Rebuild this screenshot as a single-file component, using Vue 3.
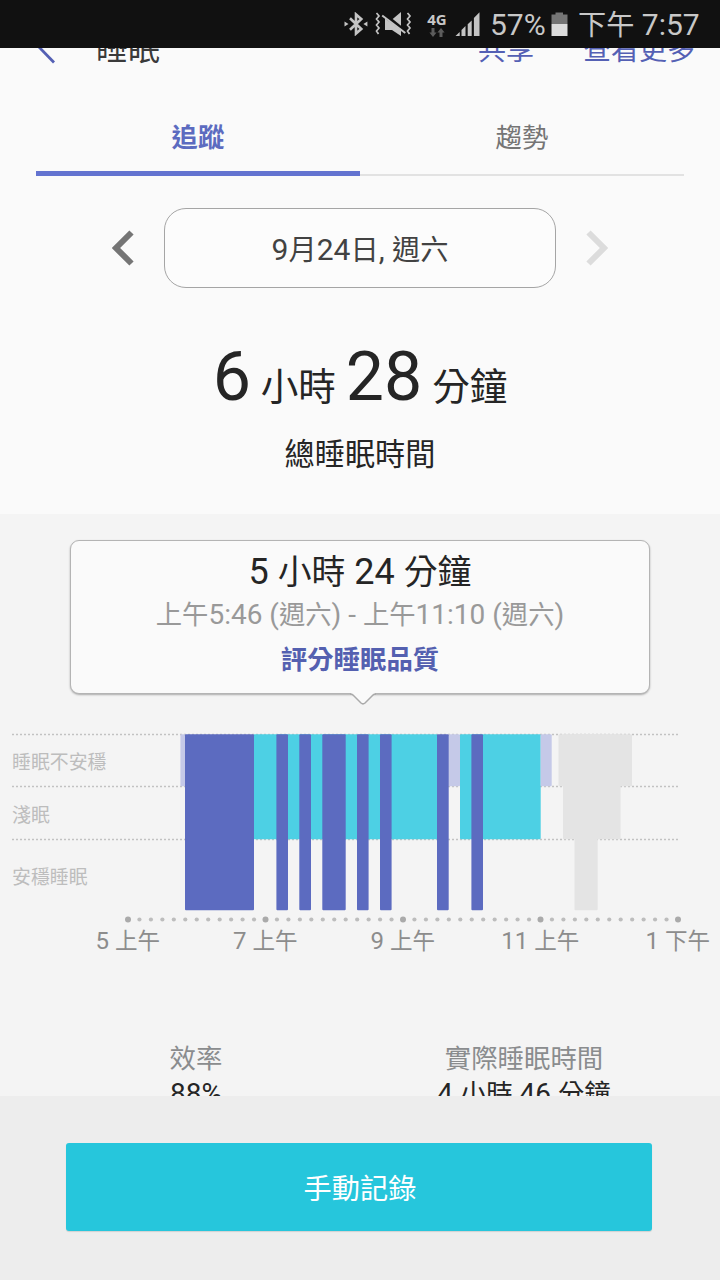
<script setup>
import { h } from 'vue'

// Renders text with Chinese runs slightly smaller than the Latin digits.
const Mixed = (props) =>
  h(
    'span',
    { class: 'mixed' },
    props.text
      .split(/([\u4e00-\u9fff]+)/)
      .filter(Boolean)
      .map((run) => (/[\u4e00-\u9fff]/.test(run) ? h('span', { class: 'han' }, run) : run))
  )
Mixed.props = ['text']

const lines = [9.5, 61.5, 114.5]

const LIGHT = 52
const MID = 105
const DEEP = 176
const bars = [
  { x: 180.4, w: 5, d: LIGHT, c: '#c5c9e8' },
  { x: 253.5, w: 184, d: MID, c: '#4dd0e4' },
  { x: 448.2, w: 11.8, d: LIGHT, c: '#c5c9e8' },
  { x: 460, w: 80.7, d: MID, c: '#4dd0e4' },
  { x: 540.7, w: 11, d: LIGHT, c: '#c5c9e8' },
  { x: 185, w: 69, d: DEEP, c: '#5c6bc0' },
  { x: 276.4, w: 11.6, d: DEEP, c: '#5c6bc0' },
  { x: 299.3, w: 11.7, d: DEEP, c: '#5c6bc0' },
  { x: 322.3, w: 23.4, d: DEEP, c: '#5c6bc0' },
  { x: 357, w: 11.6, d: DEEP, c: '#5c6bc0' },
  { x: 380, w: 11.6, d: DEEP, c: '#5c6bc0' },
  { x: 437, w: 11.7, d: DEEP, c: '#5c6bc0' },
  { x: 471.4, w: 11.6, d: DEEP, c: '#5c6bc0' },
  { x: 558.5, w: 73.5, d: LIGHT, c: '#e4e4e4' },
  { x: 563, w: 57.6, d: MID, c: '#e4e4e4' },
  { x: 574.5, w: 23.2, d: DEEP, c: '#e4e4e4' }
]

const dots = Array.from({ length: 49 }, (_, i) => ({
  x: 128 + (i * 550) / 48,
  major: i % 12 === 0
}))

const hours = ['5 上午', '7 上午', '9 上午', '11 上午', '1 下午']
</script>

<template>
  <div class="screen">
    <div class="status">
      <svg class="bt" width="24" height="24" viewBox="0 0 24 24">
        <path d="M6 6.3 L17.3 17 L12 21.6 V2.4 L17.3 7 L6 17.7" fill="none" stroke="#c4c4c4" stroke-width="2.6" />
        <path d="M0.5 9.5 L4.5 12 L0.5 14.5Z M23.4 9.5 L19.4 12 L23.4 14.5Z" fill="#c4c4c4" />
      </svg>
      <svg class="mute" width="38" height="26" viewBox="0 0 38 26">
        <path d="M27 1 V14.8 L18.7 8Z" fill="#c4c4c4" />
        <path d="M8.2 4.5 L31.3 22" stroke="#c4c4c4" stroke-width="2" />
        <path d="M11 7.5 L27 19 V25 L18 19 H11Z" fill="#c4c4c4" />
        <path d="M2.5 2 L5 5 L2.5 8 L5 11 L2.5 14 L5 17 L2.5 20 L4.5 23 M33.5 2 L36 5 L33.5 8 L36 11 L33.5 14 L36 17 L33.5 20 L35.5 23" fill="none" stroke="#c4c4c4" stroke-width="1.7" />
      </svg>
      <div class="net">
        <span>4G</span>
        <svg width="16" height="9" viewBox="0 0 16 9">
          <path d="M2.5 0 H5.5 V4.5 H7.6 L4 9 L0.4 4.5 H2.5Z M10.5 9 H13.5 V4.5 H15.6 L12 0 L8.4 4.5 H10.5Z" fill="#5c5c5c" />
        </svg>
      </div>
      <svg class="signal" width="26" height="25" viewBox="0 0 26 25">
        <path d="M0.5 24 L4.7 20 V24Z M6.5 24 V18 L10.5 14 V24Z M12.7 24 V12.3 L16.7 8.4 V24Z M18.9 24 V6 L24.5 0.3 V24Z" fill="#c4c4c4" />
      </svg>
      <span class="pct">57%</span>
      <svg class="battery" width="17" height="24" viewBox="0 0 17 24">
        <path d="M4.5 0.5 H12 V2.5 H16.5 V12 H0.5 V2.5 H4.5Z" fill="#757575" />
        <rect x="0.5" y="12" width="16" height="12" fill="#dcdcdc" />
      </svg>
      <Mixed class="clock" text="下午 7:57" />
    </div>

    <div class="overview">
      <header class="bar">
        <svg class="back" width="22" height="18" viewBox="0 0 22 18">
          <path d="M2 -2 L18 14.5" stroke="#5460b4" stroke-width="2.8" />
        </svg>
        <span class="title">睡眠</span>
        <span class="act">共享</span>
        <span class="act">查看更多</span>
      </header>
      <nav class="tabs">
        <div class="tab on">追蹤</div>
        <div class="tab">趨勢</div>
      </nav>
      <div class="picker">
        <svg width="22" height="36" viewBox="0 0 22 36">
          <path d="M19.5 2.5 L4 18 L19.5 33.5" fill="none" stroke="#757575" stroke-width="6" />
        </svg>
        <div class="date"><Mixed text="9月24日, 週六" /></div>
        <svg width="22" height="36" viewBox="0 0 22 36">
          <path d="M2.5 2.5 L18 18 L2.5 33.5" fill="none" stroke="#dcdcdc" stroke-width="6" />
        </svg>
      </div>
      <div class="total"><b>6</b> <Mixed text="小時" /> <b>28</b> <Mixed text="分鐘" /></div>
      <div class="caption">總睡眠時間</div>
    </div>

    <div class="detail">
      <div class="card">
        <div class="dur"><Mixed text="5 小時 24 分鐘" /></div>
        <div class="range"><Mixed text="上午5:46 (週六) - 上午11:10 (週六)" /></div>
        <div class="rate">評分睡眠品質</div>
        <svg class="tip" width="30" height="14" viewBox="0 0 30 14">
          <path d="M3 0 V2 L4 2 L13 11 Q15 13 17 11 L26 2 L27 2 V0Z" fill="#fafafa" />
          <path d="M2 2 Q4 2 5 3 L13 11 Q15 12.8 17 11 L25 3 Q26 2 28 2" fill="none" stroke="#aaa" stroke-width="1.5" />
        </svg>
      </div>

      <div class="chart">
        <div class="levels">
          <span>睡眠不安穩</span>
          <span>淺眠</span>
          <span>安穩睡眠</span>
        </div>
        <svg class="plot" width="720" height="200" viewBox="0 0 720 200">
          <line v-for="y in lines" :key="y" x1="12" x2="678" :y1="y" :y2="y" stroke="#c2c2c2" stroke-width="1.7" stroke-dasharray="2 2" />
          <rect v-for="(b, i) in bars" :key="i" :x="b.x" y="9.3" :width="b.w" :height="b.d" :fill="b.c" rx="1" />
          <circle v-for="d in dots" :key="d.x" :cx="d.x" cy="194.5" :r="d.major ? 3 : 2.1" :fill="d.major ? '#aaa' : '#bdbdbd'" />
        </svg>
      </div>
      <div class="hours">
        <div v-for="t in hours" :key="t"><Mixed :text="t" /></div>
      </div>

      <div class="stats">
        <div>
          <div class="name">效率</div>
          <div class="val">88%</div>
        </div>
        <div>
          <div class="name">實際睡眠時間</div>
          <div class="val"><Mixed text="4 小時 46 分鐘" /></div>
        </div>
      </div>
    </div>

    <footer class="foot">
      <button class="record">手動記錄</button>
    </footer>
  </div>
</template>

<style>
body { margin: 0; overflow: hidden; }
.mixed { white-space: pre; }
.han { font-size: 0.94em; }
</style>

<style scoped>
.screen {
  width: 720px;
  height: 1280px;
  display: flex;
  flex-direction: column;
  overflow: hidden;
  font-family: Roboto, "Noto Sans CJK TC", sans-serif;
  color: #252525;
  background: #fafafa;
}
.status {
  box-sizing: border-box;
  flex: none;
  height: 48px;
  padding-left: 344px;
  display: flex;
  align-items: center;
  background: #111;
  color: #c8c8c8;
  font-size: 30px;
  line-height: 48px;
  white-space: nowrap;
}
.status svg { flex: none; }
.mute { margin-left: 6px; }
.net {
  width: 22px;
  margin-left: 14px;
  display: flex;
  flex-direction: column;
  align-items: center;
  font: bold 15px/17px "Noto Sans", sans-serif;
}
.signal { margin-left: 7px; }
.pct { margin-left: 9px; width: 57px; padding-top: 2px; }
.battery { margin-left: 4px; }
.clock { margin-left: 10px; padding-top: 2px; }

.overview { flex: none; height: 466px; overflow: hidden; text-align: center; }
.bar {
  height: 52px;
  padding: 0 25px 0 36px;
  display: flex;
  align-items: flex-start;
  color: #5460b4;
  overflow: hidden;
}
.back { flex: none; }
.title { margin: -15px auto 0 38px; font-size: 32px; line-height: 32px; color: #3a3a3a; }
.act { margin: -11px 0 0 49px; font-size: 28px; line-height: 28px; }
.tabs { height: 76px; margin: 0 36px; display: flex; }
.tab {
  box-sizing: border-box;
  flex: 1;
  height: 76px;
  font-size: 26.4px;
  line-height: 76px;
  color: #757575;
  border-bottom: 2px solid #e2e2e2;
}
.on { color: #5c6bc0; font-weight: 700; border-bottom: 5px solid #6373d0; }
.picker {
  height: 80px;
  margin-top: 32px;
  display: flex;
  justify-content: center;
  align-items: center;
  gap: 30px;
}
.date {
  box-sizing: border-box;
  width: 392px;
  height: 80px;
  border: 1px solid #a5a5a5;
  border-radius: 22px;
  background: #fcfcfc;
  color: #424242;
  font-size: 30px;
  line-height: 81px;
}
.total { margin-top: 49px; height: 80px; font-size: 40px; line-height: 80px; white-space: pre; }
.total b { font-size: 68px; font-weight: 400; }
.caption { margin-top: 18px; font-size: 30.2px; line-height: 40px; }

.detail {
  flex: none;
  box-sizing: border-box;
  height: 582px;
  padding-top: 26px;
  overflow: hidden;
  background: #f4f4f4;
  text-align: center;
}
.card {
  position: relative;
  box-sizing: border-box;
  width: 580px;
  height: 154px;
  margin: 0 auto;
  border: 1px solid #b4b4b4;
  border-radius: 9px;
  background: #fafafa;
  box-shadow: 0 1px 2px rgba(0, 0, 0, 0.3);
}
.dur { height: 52px; font-size: 36px; line-height: 62px; }
.range { height: 44px; font-size: 28px; line-height: 44px; color: #999; }
.rate { height: 44px; font-size: 26.4px; line-height: 46px; font-weight: 700; color: #5460b0; }
.tip { position: absolute; left: 277px; top: 151px; }

.chart { position: relative; height: 200px; margin-top: 31px; }
.levels {
  display: grid;
  grid-template-rows: 52px 53px 71px;
  padding: 12px 0 0 12px;
  align-items: center;
  text-align: left;
  font-size: 18.9px;
  line-height: 24px;
  color: #bdbdbd;
}
.plot { position: absolute; left: 0; top: 0; }
.hours {
  display: grid;
  grid-template-columns: repeat(5, 137.5px);
  margin-left: 59px;
  font-size: 24px;
  line-height: 32px;
  color: #8c8c8c;
}
.stats {
  display: grid;
  grid-template-columns: 328px 328px;
  margin: 84px 32px 0;
}
.name { font-size: 26.4px; line-height: 34px; color: #8a8c8e; }
.val { font-size: 28px; line-height: 36px; }

.foot {
  box-sizing: border-box;
  flex: none;
  height: 184px;
  padding: 47px 68px 0 66px;
  background: #ededed;
}
.record {
  display: block;
  width: 586px;
  height: 88px;
  padding: 5px 0 0 2px;
  border: 0;
  border-radius: 3px;
  background: #26c6dc;
  box-shadow: 0 1px 1px rgba(0, 0, 0, 0.12);
  color: #fff;
  font: 28.2px/83px Roboto, "Noto Sans CJK TC", sans-serif;
}
</style>
